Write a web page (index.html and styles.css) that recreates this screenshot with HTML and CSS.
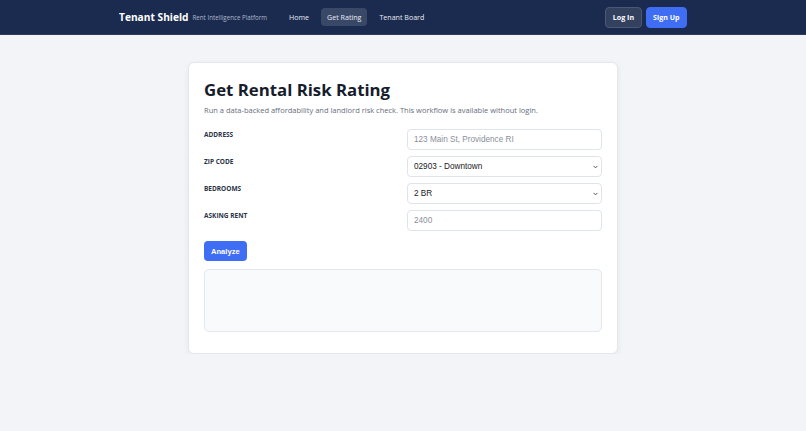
FILE: index.html
```
<!DOCTYPE html>
<html lang="en">

<head>
    <meta charset="UTF-8">
    <meta name="viewport" content="width=device-width, initial-scale=1.0">
    <title>Tenant Shield - Get Rating</title>
    <link rel="stylesheet" href="styles.css">
</head>

<body>
    <nav class="topbar">
        <div class="topbar-inner">
            <div class="brand">
                <span class="brand-name">Tenant Shield</span>
                <span class="brand-tag">Rent Intelligence Platform</span>
            </div>
            <div class="links">
                <a href="#" class="link">Home</a>
                <a href="#" class="link active">Get Rating</a>
                <a href="#" class="link">Tenant Board</a>
            </div>
            <div class="auth">
                <button class="btn-login">Log In</button>
                <button class="btn-signup">Sign Up</button>
            </div>
        </div>
    </nav>

    <main class="page">
        <section class="card">
            <h1 class="title">Get Rental Risk Rating</h1>
            <p class="sub">Run a data-backed affordability and landlord risk check. This workflow is available without login.</p>

            <form class="form">
                <div class="row">
                    <label for="address">Address</label>
                    <input type="text" id="address" class="field" placeholder="123 Main St, Providence RI">
                </div>
                <div class="row">
                    <label for="zip">Zip Code</label>
                    <select id="zip" class="field pick">
                        <option>02903 - Downtown</option>
                    </select>
                </div>
                <div class="row">
                    <label for="beds">Bedrooms</label>
                    <select id="beds" class="field pick">
                        <option>2 BR</option>
                    </select>
                </div>
                <div class="row">
                    <label for="rent">Asking Rent</label>
                    <input type="text" id="rent" class="field" placeholder="2400">
                </div>
                <button type="button" class="btn-analyze">Analyze</button>
            </form>

            <div class="result"></div>
        </section>
    </main>
</body>

</html>
```

FILE: styles.css
```
* {
    margin: 0;
    padding: 0;
    box-sizing: border-box;
}

body {
    background-color: #f3f4f7;
    font-family: 'Open Sans', 'Noto Sans', sans-serif;
    color: #1b2233;
}

.topbar {
    height: 35px;
    background-color: #1b2b4f;
    border-bottom: 1px solid #2c3b5e;
}

.topbar-inner {
    width: 568px;
    height: 100%;
    margin: 0 auto;
    display: flex;
    align-items: center;
}

.brand {
    display: flex;
    align-items: center;
    gap: 4px;
}

.brand-name {
    color: white;
    font-size: 10.2px;
    font-weight: 700;
}

.brand-tag {
    color: #aeb8cc;
    font-size: 6.2px;
}

.links {
    display: flex;
    align-items: center;
    margin-left: 16px;
}

.link {
    color: #e8ecf4;
    text-decoration: none;
    font-size: 7.1px;
    height: 18px;
    line-height: 18px;
    padding: 0 6px;
    margin-right: 6px;
    border-radius: 4px;
}

.active {
    background-color: #3a4868;
}

.auth {
    margin-left: auto;
    display: flex;
    gap: 4px;
}

.btn-login,
.btn-signup {
    height: 21px;
    padding: 0 6.5px;
    border-radius: 4px;
    font-family: inherit;
    font-size: 7.1px;
    font-weight: 700;
    color: white;
    cursor: pointer;
}

.btn-login {
    background-color: #33415f;
    border: 1px solid #4a5876;
}

.btn-signup {
    background-color: #3f6df3;
    border: 1px solid #3f6df3;
}

.page {
    padding-top: 27px;
}

.card {
    width: 430px;
    margin: 0 auto;
    background-color: white;
    border: 1px solid #e3e6ec;
    border-radius: 6px;
    padding: 15px 15px 21px;
    box-shadow: 0 2px 6px rgba(20, 30, 60, 0.06);
}

.title {
    font-size: 16.8px;
    font-weight: 700;
    color: #161c2b;
    line-height: 24px;
}

.sub {
    font-size: 7.5px;
    line-height: 12px;
    color: #666d7c;
    margin-top: 2px;
}

.form {
    margin-top: 13px;
    display: flex;
    flex-direction: column;
}

.row {
    display: grid;
    grid-template-columns: 1fr 1fr;
    gap: 8px;
    margin-bottom: 6px;
}

label {
    font-size: 6.5px;
    font-weight: 700;
    text-transform: uppercase;
    color: #2b3447;
    padding-top: 1px;
}

.field {
    height: 21px;
    border: 1px solid #dfe3ea;
    border-radius: 4px;
    background-color: white;
    padding: 0 6px;
    font-family: 'Liberation Sans', Arial, sans-serif;
    font-size: 8.2px;
    color: #222;
}

.field::placeholder {
    color: #8a8f99;
}

.pick {
    appearance: none;
    -webkit-appearance: none;
    background-image: url("data:image/svg+xml,%3Csvg xmlns='http://www.w3.org/2000/svg' width='6' height='4' viewBox='0 0 6 4'%3E%3Cpath d='M0.7 0.7 L3 3 L5.3 0.7' fill='none' stroke='%23444' stroke-width='1.1'/%3E%3C/svg%3E");
    background-repeat: no-repeat;
    background-position: right 3px center;
    background-size: 5px 4px;
}

.btn-analyze {
    align-self: flex-start;
    margin-top: 4px;
    height: 20px;
    padding: 0 7px;
    background-color: #3f6df3;
    color: white;
    border: none;
    border-radius: 4px;
    font-family: 'Liberation Sans', Arial, sans-serif;
    font-size: 7.6px;
    font-weight: 700;
    cursor: pointer;
}

.result {
    margin-top: 8px;
    height: 63px;
    background-color: #f8fafc;
    border: 1px solid #e3e7ee;
    border-radius: 5px;
}
```
